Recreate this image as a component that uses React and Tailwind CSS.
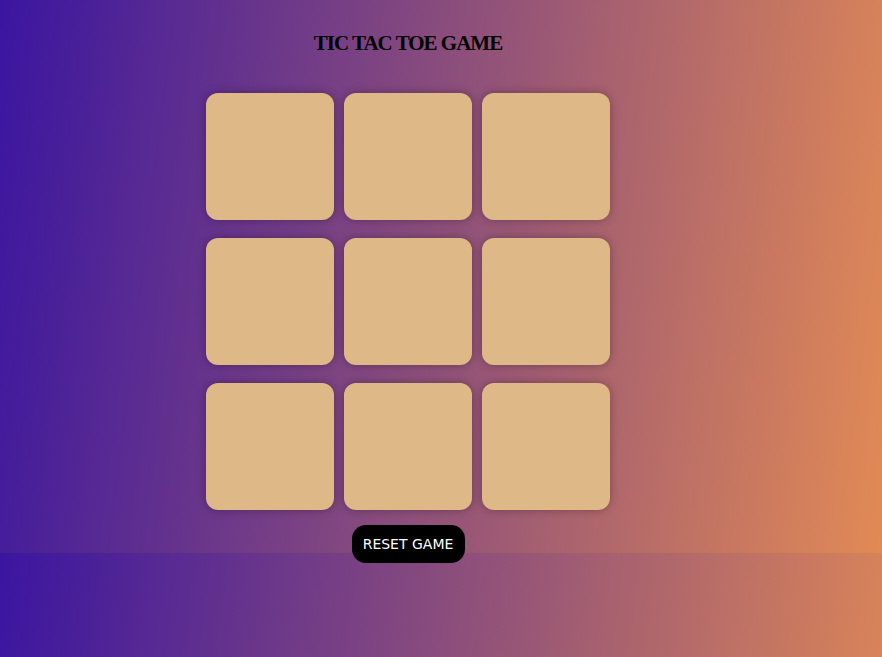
import React from "react";

const cells = Array.from({ length: 9 }, (_, i) => i);

export default function App() {
  return (
    <div className="h-[657px] w-full bg-[linear-gradient(97deg,#3a15a0_0%,#e28a55_100%)] bg-[length:100%_553px] bg-repeat">
      <div className="flex h-[553px] w-[816px] flex-col items-center">
        <h1 className="mt-[30px] shrink-0 text-[21px] font-bold leading-[26px] tracking-[-1px] text-black [font-family:'Liberation_Serif',serif]">
          TIC TAC TOE GAME
        </h1>
        <div className="mt-[37px] grid shrink-0 grid-cols-[repeat(3,128px)] gap-x-[10px] gap-y-[18px]">
          {cells.map((i) => (
            <button
              key={i}
              className="h-[127px] w-[128px] rounded-[12px] bg-[#dfb887] shadow-[0_0_10px_rgba(0,0,0,0.3)]"
            />
          ))}
        </div>
        <button className="mt-[15px] h-[38px] w-[113px] shrink-0 rounded-[14px] bg-black text-[14px] text-white [font-family:'DejaVu_Sans',sans-serif]">
          RESET GAME
        </button>
      </div>
    </div>
  );
}
